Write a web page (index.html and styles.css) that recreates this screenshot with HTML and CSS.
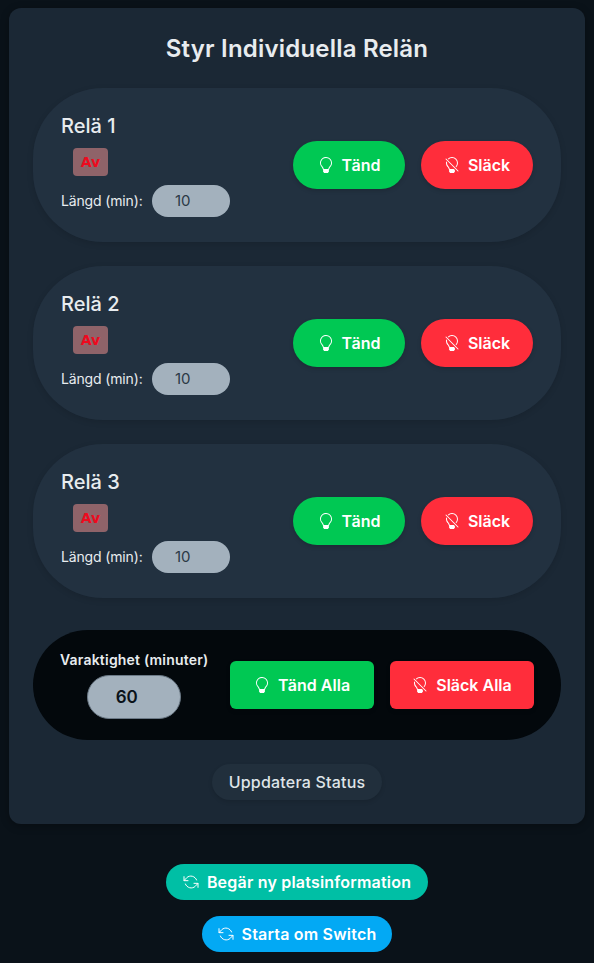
FILE: index.html
```html
<!DOCTYPE html>
<html lang="sv">
<head>
    <meta charset="UTF-8">
    <title>Styr Individuella Relän</title>
    <link rel="stylesheet" href="styles.css">
</head>
<body>
    <svg class="icon-defs" width="0" height="0">
        <symbol id="bulb" viewBox="0 0 16 16">
            <path fill="currentColor" d="M2 6a6 6 0 1 1 10.174 4.31c-.203.196-.359.4-.453.619l-.762 1.769A.5.5 0 0 1 10.5 13a.5.5 0 0 1 0 1 .5.5 0 0 1 0 1l-.224.447a1 1 0 0 1-.894.553H6.618a1 1 0 0 1-.894-.553L5.5 15a.5.5 0 0 1 0-1 .5.5 0 0 1 0-1 .5.5 0 0 1-.46-.302l-.761-1.77a2 2 0 0 0-.453-.618A5.98 5.98 0 0 1 2 6m6-5a5 5 0 0 0-3.479 8.592c.263.254.514.564.676.941L5.83 12h4.342l.632-1.467c.162-.377.413-.687.676-.941A5 5 0 0 0 8 1"/>
        </symbol>
        <symbol id="bulb-off" viewBox="0 0 16 16">
            <path fill="currentColor" d="M2.23 4.35A6 6 0 0 0 2 6c0 1.691.7 3.22 1.826 4.31.203.196.359.4.453.619l.762 1.769A.5.5 0 0 0 5.5 13a.5.5 0 0 0 0 1 .5.5 0 0 0 0 1l.224.447a1 1 0 0 0 .894.553h2.764a1 1 0 0 0 .894-.553L10.5 15a.5.5 0 0 0 0-1 .5.5 0 0 0 0-1 .5.5 0 0 0 .288-.091L9.878 12H5.83l-.632-1.467a3 3 0 0 0-.676-.941 4.98 4.98 0 0 1-1.455-4.405zm1.588-2.653.708.707a5 5 0 0 1 7.07 7.07l.707.707a6 6 0 0 0-8.484-8.484zm-2.172-.051a.5.5 0 0 1 .708 0l12 12a.5.5 0 0 1-.708.708l-12-12a.5.5 0 0 1 0-.708"/>
        </symbol>
        <symbol id="refresh" viewBox="0 0 24 24">
            <path fill="none" stroke="currentColor" stroke-width="1.5" stroke-linecap="round" stroke-linejoin="round" d="M1.5 4v6h6M22.5 20v-6h-6M20.4 9A9 9 0 0 0 5.6 5.6L1.5 10M22.5 14l-4.1 4.4A9 9 0 0 1 3.6 15"/>
        </symbol>
    </svg>

    <div class="panel">
        <h2 class="panel-title">Styr Individuella Relän</h2>

        <!-- Relä 1 -->
        <div class="relay">
            <div class="relay-info">
                <h3>Relä 1</h3>
                <span class="badge">Av</span>
                <div class="length">
                    <label for="len1">Längd (min):</label>
                    <input type="number" id="len1" value="10">
                </div>
            </div>
            <div class="relay-buttons">
                <button class="btn on"><svg class="icon"><use href="#bulb"/></svg>Tänd</button>
                <button class="btn off"><svg class="icon"><use href="#bulb-off"/></svg>Släck</button>
            </div>
        </div>

        <!-- Relä 2 -->
        <div class="relay">
            <div class="relay-info">
                <h3>Relä 2</h3>
                <span class="badge">Av</span>
                <div class="length">
                    <label for="len2">Längd (min):</label>
                    <input type="number" id="len2" value="10">
                </div>
            </div>
            <div class="relay-buttons">
                <button class="btn on"><svg class="icon"><use href="#bulb"/></svg>Tänd</button>
                <button class="btn off"><svg class="icon"><use href="#bulb-off"/></svg>Släck</button>
            </div>
        </div>

        <!-- Relä 3 -->
        <div class="relay">
            <div class="relay-info">
                <h3>Relä 3</h3>
                <span class="badge">Av</span>
                <div class="length">
                    <label for="len3">Längd (min):</label>
                    <input type="number" id="len3" value="10">
                </div>
            </div>
            <div class="relay-buttons">
                <button class="btn on"><svg class="icon"><use href="#bulb"/></svg>Tänd</button>
                <button class="btn off"><svg class="icon"><use href="#bulb-off"/></svg>Släck</button>
            </div>
        </div>

        <!-- Alla reläer -->
        <div class="all">
            <div class="duration">
                <label for="duration">Varaktighet (minuter)</label>
                <input type="number" id="duration" value="60">
            </div>
            <div class="all-buttons">
                <button class="btn square on"><svg class="icon"><use href="#bulb"/></svg>Tänd Alla</button>
                <button class="btn square off"><svg class="icon"><use href="#bulb-off"/></svg>Släck Alla</button>
            </div>
        </div>

        <div class="refresh-row">
            <button class="status-btn">Uppdatera Status</button>
        </div>
    </div>

    <div class="footer-actions">
        <button class="footer-btn teal"><svg class="icon"><use href="#refresh"/></svg>Begär ny platsinformation</button>
        <button class="footer-btn blue"><svg class="icon"><use href="#refresh"/></svg>Starta om Switch</button>
    </div>
</body>
</html>
```

FILE: styles.css
```css
* {
    box-sizing: border-box;
}
html, body {
    height: 963px;
    overflow: hidden;
}
body {
    margin: 0;
    padding: 8px 9px 0;
    background-color: #0a1219;
    color: #e8ecef;
    font-family: Inter, "Open Sans", sans-serif;
}
.icon-defs {
    position: absolute;
}
.icon {
    width: 16px;
    height: 16px;
    flex: none;
}
.panel {
    height: 816px;
    padding: 24px;
    background-color: #1b2835;
    border-radius: 12px;
    box-shadow: 0 2px 8px rgba(0, 0, 0, 0.3);
}
.panel-title {
    margin: 0 0 22px;
    height: 34px;
    font-size: 24px;
    line-height: 34px;
    font-weight: 600;
    letter-spacing: 0.2px;
    text-align: center;
    color: #e8ecef;
}
.relay {
    display: flex;
    justify-content: space-between;
    align-items: center;
    height: 154px;
    margin-bottom: 24px;
    padding: 0 28px;
    background-color: #223140;
    border-radius: 70px;
    box-shadow: 0 2px 6px rgba(0, 0, 0, 0.12);
}
.relay-info h3 {
    margin: 0 0 10px;
    font-size: 20px;
    line-height: 24px;
    font-weight: 500;
}
.badge {
    display: block;
    width: 35px;
    height: 28px;
    margin: 0 0 9px 12px;
    background-color: #8f6369;
    border-radius: 4px;
    color: #ee0a1e;
    font-family: "DejaVu Sans", Verdana, sans-serif;
    font-size: 14px;
    font-weight: 700;
    line-height: 28px;
    text-align: center;
}
.length {
    display: flex;
    align-items: center;
    gap: 9px;
    font-size: 14px;
}
.length label {
    width: 82px;
    white-space: nowrap;
    letter-spacing: -0.15px;
}
.length input {
    width: 78px;
    height: 32px;
    padding: 0 0 0 23px;
    border: none;
    border-radius: 16px;
    background-color: #a3b1bd;
    color: #2c3946;
    font: inherit;
    font-size: 15px;
}
input[type="number"] {
    appearance: textfield;
}
.relay-buttons, .all-buttons {
    display: flex;
    gap: 16px;
}
.btn {
    display: flex;
    align-items: center;
    justify-content: center;
    gap: 8px;
    width: 112px;
    height: 48px;
    padding: 0;
    border: none;
    border-radius: 24px;
    color: #fff;
    font: inherit;
    font-size: 16px;
    font-weight: 600;
    box-shadow: 0 2px 4px rgba(0, 0, 0, 0.15);
}
.btn.on {
    background-color: #00c853;
}
.btn.off {
    background-color: #ff2d3b;
}
.btn.square {
    width: 144px;
    border-radius: 6px;
}
.all {
    display: flex;
    justify-content: space-between;
    align-items: center;
    height: 110px;
    margin-top: 32px;
    padding: 0 27px;
    background-color: #03080c;
    border-radius: 55px;
}
.duration {
    display: flex;
    flex-direction: column;
    align-items: center;
    gap: 7px;
    font-size: 14px;
    font-weight: 600;
    letter-spacing: 0.2px;
    white-space: nowrap;
}
.duration input {
    width: 94px;
    height: 44px;
    border: 1px solid #6b7986;
    border-radius: 22px;
    background-color: #a3b1bd;
    color: #0a1219;
    font: inherit;
    font-size: 17px;
    text-align: center;
}
.refresh-row {
    display: flex;
    justify-content: center;
    margin-top: 24px;
}
.status-btn {
    width: 170px;
    height: 36px;
    padding: 0;
    border: none;
    border-radius: 18px;
    background-color: #212f3c;
    color: #dfe4e8;
    font: inherit;
    font-size: 16px;
    font-weight: 500;
    letter-spacing: 0.2px;
    box-shadow: 0 2px 4px rgba(0, 0, 0, 0.12);
}
.footer-actions {
    display: flex;
    flex-direction: column;
    align-items: center;
    gap: 16px;
    margin-top: 40px;
}
.footer-btn {
    display: flex;
    align-items: center;
    justify-content: center;
    gap: 8px;
    height: 36px;
    padding: 0;
    border: none;
    border-radius: 18px;
    color: #fff;
    font: inherit;
    font-size: 16px;
    font-weight: 600;
    letter-spacing: 0.2px;
}
.footer-btn.teal {
    width: 262px;
    background-color: #00bfa5;
}
.footer-btn.blue {
    width: 190px;
    background-color: #03a9f4;
}
```
